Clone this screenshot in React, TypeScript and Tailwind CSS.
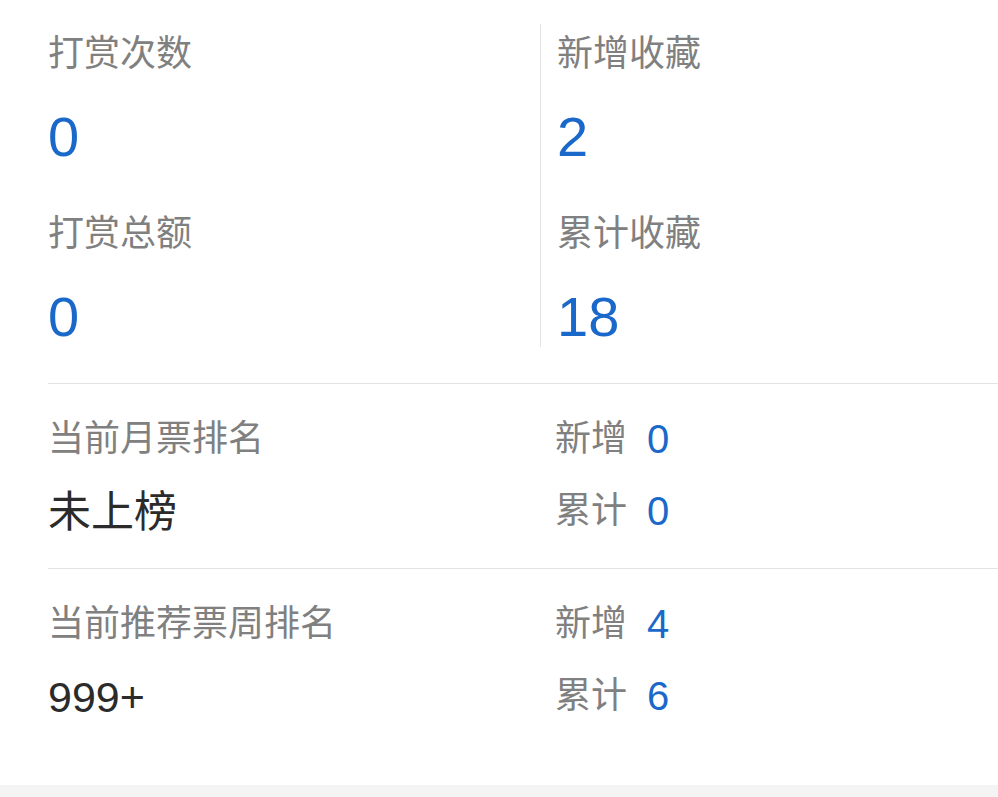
import React from "react";

const FONT = "font-['Liberation_Sans','Noto_Sans_CJK_SC',sans-serif]";

function SideRow({ label, value, className = "" }: { label: string; value: string; className?: string }) {
  return (
    <div className={`flex h-[48px] items-center ${className}`}>
      <span className="text-[36px] leading-[48px] text-[#808080]">{label}</span>
      <span className="ml-[20px] text-[40px] leading-[48px] text-[#1a68c9]">{value}</span>
    </div>
  );
}

function RankSection({ title, value, added, total }: { title: string; value: string; added: string; total: string }) {
  return (
    <div className="flex border-t border-[#e3e3e3] pt-[31px]">
      <div className="w-[507px]">
        <div className="h-[48px] text-[36px] leading-[48px] text-[#808080] whitespace-nowrap">{title}</div>
        <div className="mt-[21px] h-[56px] text-[43px] leading-[56px] text-[#2b2b2b]">{value}</div>
      </div>
      <div>
        <SideRow label="新增" value={added} />
        <SideRow label="累计" value={total} className="mt-[24px]" />
      </div>
    </div>
  );
}

function StatBlock({ label, value, first }: { label: string; value: string; first?: boolean }) {
  return (
    <div className={first ? "" : "mt-[43px]"}>
      <div className="h-[48px] text-[36px] leading-[48px] text-[#808080]">{label}</div>
      <div className="mt-[29px] h-[60px] text-[56px] leading-[60px] text-[#1a68c9]">{value}</div>
    </div>
  );
}

export default function App() {
  return (
    <div className={`w-[998px] h-[797px] bg-white flex flex-col ${FONT}`}>
      <div className="flex-1 pl-[48px] pt-[24px]">
        <div className="flex">
          <div className="w-[493px] border-r border-[#e3e3e3] pt-[6px]">
            <StatBlock label="打赏次数" value="0" first />
            <StatBlock label="打赏总额" value="0" />
          </div>
          <div className="pl-[16px] pt-[6px]">
            <StatBlock label="新增收藏" value="2" first />
            <StatBlock label="累计收藏" value="18" />
          </div>
        </div>
        <div className="mt-[36px]">
          <RankSection title="当前月票排名" value="未上榜" added="0" total="0" />
          <div className="mt-[28px]">
            <RankSection title="当前推荐票周排名" value="999+" added="4" total="6" />
          </div>
        </div>
      </div>
      <div className="h-[12px] bg-[#f4f4f4]" />
    </div>
  );
}
